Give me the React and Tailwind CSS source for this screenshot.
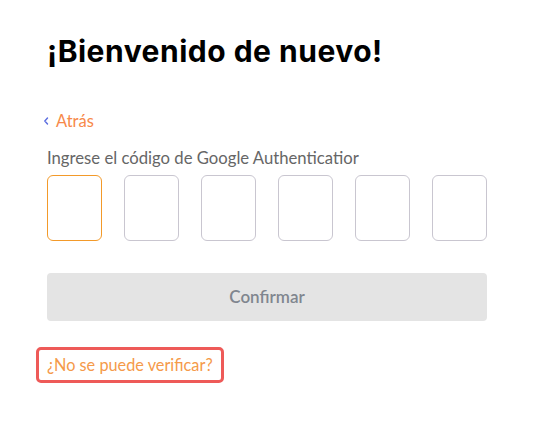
export default function App() {
  const digits = [0, 1, 2, 3, 4, 5];

  return (
    <div className="min-h-screen bg-white font-['Lato',sans-serif]">
      <div className="w-[440px] ml-[47px] pt-[31px]">
        <h1 className="font-['Inter',sans-serif] text-[30px] font-bold tracking-[0.5px] leading-[40px] text-black">
          ¡Bienvenido de nuevo!
        </h1>

        <button className="mt-[40px] flex items-center gap-[7px] text-[16.5px] leading-[20px] text-[#f7894a]">
          <svg width="6" height="8" viewBox="0 0 6 8" className="-ml-[4px]">
            <path
              d="M4.5 1 L1.8 4 L4.5 7"
              fill="none"
              stroke="#5b6de0"
              strokeWidth="1.4"
              strokeLinecap="round"
              strokeLinejoin="round"
            />
          </svg>
          Atrás
        </button>

        <p className="mt-[17px] text-[16.7px] leading-[20px] text-[#666666]">
          Ingrese el código de Google Authenticatior
        </p>

        <div className="mt-[7px] flex gap-[22px]">
          {digits.map((d) => (
            <input
              key={d}
              maxLength={1}
              className={
                d === 0
                  ? "w-[55px] h-[66px] rounded-[6px] border border-[#f39a2a] text-center text-[24px] outline-none"
                  : "w-[55px] h-[66px] rounded-[6px] border border-[#c9c6d0] text-center text-[24px] outline-none"
              }
            />
          ))}
        </div>

        <button className="mt-[32px] w-full h-[48px] rounded-[4px] bg-[#e4e4e4] text-[17px] font-semibold text-[#80868f]">
          Confirmar
        </button>

        <div className="mt-[26px] -ml-[11px]">
          <a
            href="#"
            className="inline-block rounded-[5px] border-[3px] border-[#ee5a58] px-[8px] py-[5px] text-[16.3px] leading-[20px] text-[#f59a4a]"
          >
            ¿No se puede verificar?
          </a>
        </div>
      </div>
    </div>
  );
}
